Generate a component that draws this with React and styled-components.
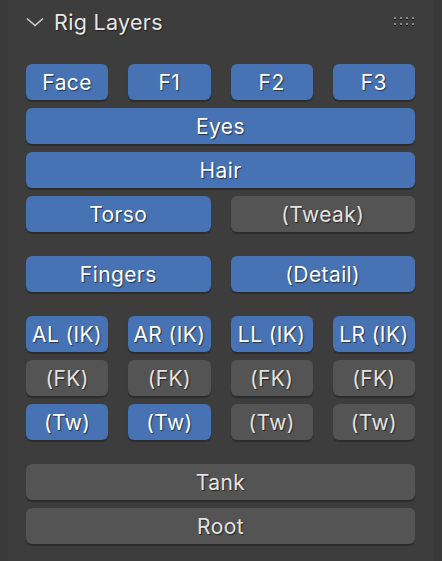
import styled, { createGlobalStyle } from 'styled-components';

const GlobalStyle = createGlobalStyle`
  html, body {
    margin: 0;
    padding: 0;
    background: #393939;
  }
  body {
    font-family: Inter, "Noto Sans", "DejaVu Sans", sans-serif;
  }
`;

const Panel = styled.div`
  width: 426px;
  min-height: 552px;
  margin: 0 8px;
  box-sizing: border-box;
  background: #3d3d3d;
  padding: 0 19px 0 18px;
  display: flex;
  flex-direction: column;
  > * {
    flex-shrink: 0;
  }
`;

const Header = styled.div`
  height: 44px;
  display: flex;
  align-items: center;
  color: #e6e6e6;
  font-size: 21.5px;
  letter-spacing: 0.3px;
  text-shadow: 1px 1px 1px rgba(0, 0, 0, 0.5);
  margin-bottom: 20px;
`;

const Title = styled.span`
  margin-left: 10px;
  flex: 1;
`;

const Section = styled.div`
  display: flex;
  flex-direction: column;
  gap: 8px;
  margin-bottom: 24px;
`;

const Row = styled.div`
  display: grid;
  grid-template-columns: repeat(${(p) => p.$cols}, 1fr);
  column-gap: 20px;
`;

const Button = styled.div`
  height: 36px;
  border-radius: 6px;
  display: flex;
  align-items: center;
  justify-content: center;
  font-size: 21px;
  letter-spacing: 0.4px;
  color: ${(p) => (p.$on ? '#ffffff' : '#e2e2e2')};
  background: ${(p) => (p.$on ? '#4772b3' : '#545454')};
  box-shadow: 0 2px 1px rgba(0, 0, 0, 0.28);
  text-shadow: 1px 1px 1px rgba(0, 0, 0, 0.55);
  user-select: none;
`;

const Chevron = () => (
  <svg width="18" height="10" viewBox="0 0 18 10">
    <path d="M1 1.5 L9 8.5 L17 1.5" fill="none" stroke="#cfcfcf" strokeWidth="1.6" />
  </svg>
);

const Grip = () => (
  <svg width="21" height="10" viewBox="0 0 21 10">
    {[0, 6, 12, 18].map((x) =>
      [0, 6].map((y) => (
        <g key={`${x}-${y}`}>
          <rect x={x} y={y} width="2" height="2" fill="#8a8a8a" />
          <rect x={x} y={y + 2} width="2" height="1" fill="#111" />
        </g>
      ))
    )}
  </svg>
);

const sections = [
  [
    [['Face', 1], ['F1', 1], ['F2', 1], ['F3', 1]],
    [['Eyes', 1]],
    [['Hair', 1]],
    [['Torso', 1], ['(Tweak)', 0]],
  ],
  [[['Fingers', 1], ['(Detail)', 1]]],
  [
    [['AL (IK)', 1], ['AR (IK)', 1], ['LL (IK)', 1], ['LR (IK)', 1]],
    [['(FK)', 0], ['(FK)', 0], ['(FK)', 0], ['(FK)', 0]],
    [['(Tw)', 1], ['(Tw)', 1], ['(Tw)', 0], ['(Tw)', 0]],
  ],
  [[['Tank', 0]], [['Root', 0]]],
];

export default function App() {
  return (
    <>
      <GlobalStyle />
      <Panel>
        <Header>
          <Chevron />
          <Title>Rig Layers</Title>
          <Grip />
        </Header>
        {sections.map((rows, si) => (
          <Section key={si}>
            {rows.map((row, ri) => (
              <Row key={ri} $cols={row.length}>
                {row.map(([label, on], bi) => (
                  <Button key={bi} $on={!!on}>
                    {label}
                  </Button>
                ))}
              </Row>
            ))}
          </Section>
        ))}
      </Panel>
    </>
  );
}
